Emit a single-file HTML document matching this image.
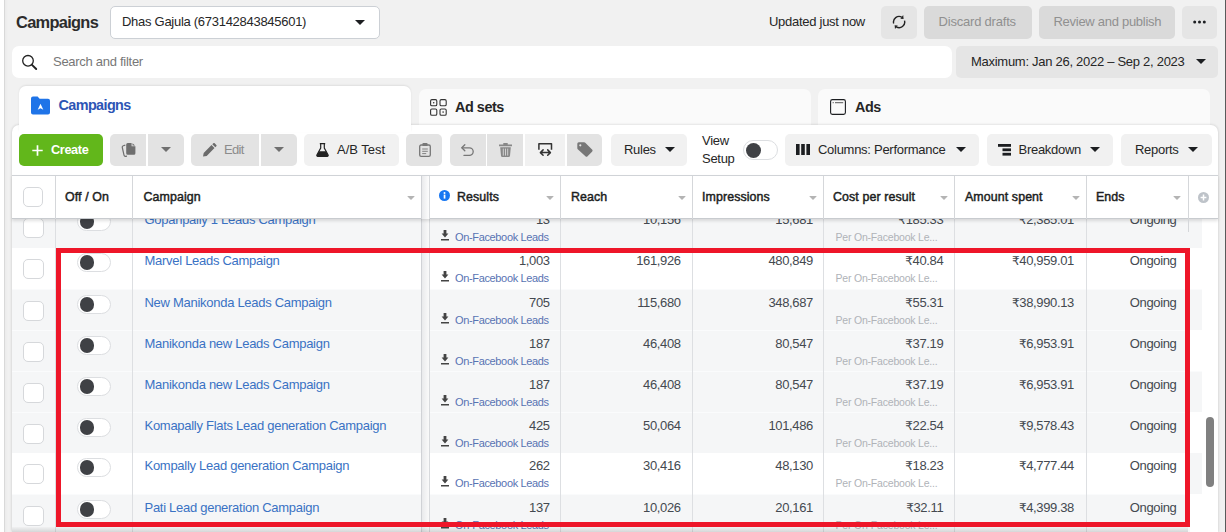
<!DOCTYPE html>
<html><head><meta charset="utf-8"><title>Campaigns</title>
<style>
*{box-sizing:border-box;margin:0;padding:0}
html,body{width:1226px;height:532px;overflow:hidden}
body{background:#f1f1f1;font-family:"Liberation Sans","DejaVu Sans",sans-serif;font-size:13px;letter-spacing:-.28px;color:#262626;position:relative}
.abs{position:absolute}
svg{position:absolute;display:block}
.tx{position:absolute;white-space:nowrap;line-height:16px;font-size:13px}
.btn{position:absolute;background:#e3e3e3;border-radius:5px;height:32px;top:134px;white-space:nowrap}
.btn.lt{background:#f1f1f1}
.btn .tx{top:8px}
.tri{position:absolute;width:0;height:0;border-left:5px solid transparent;border-right:5px solid transparent;border-top:5.5px solid #1c1e21}
.tri.g{border-top-color:#707070}
.tri.s{border-left-width:4px;border-right-width:4px;border-top:4.4px solid #b4b4b4;border-radius:1px}
/* table */
#rows{position:absolute;left:12px;top:0;width:1190px;height:532px;overflow:hidden}
.row{position:absolute;left:0;width:1190px;background:#fff;color:#444950}
.row.g{background:#f5f6f7;border-top:1px solid #fafbfc}
.row>*{position:absolute}
.cb{left:11.2px;top:10.6px;width:20.4px;height:20.4px;border:1px solid #d6d8db;border-radius:5px;background:#fff}
.tg{left:65px;top:5px;width:34px;height:18.5px;border:1px solid #dcdee1;border-radius:10px;background:#fff}
.tg b{position:absolute;left:1.6px;top:1px;width:14.5px;height:14.5px;border-radius:50%;background:#3f4145}
.nm{left:132.5px;top:5px;line-height:16px;font-size:13px;color:#3a72c4;white-space:nowrap}
.n{top:5px;line-height:16px;font-size:13px;white-space:nowrap;letter-spacing:-.35px}
.n u{text-decoration:none;font-size:12px}
.sub{top:24px;height:12px;width:120px}
.sub svg{left:0;top:-1px}
.sub em{position:absolute;left:14.5px;top:0;font-style:normal;font-size:11px;line-height:12px;color:#5873b3;white-space:nowrap;letter-spacing:-.35px}
.sub2{top:24px;font-size:10.5px;line-height:12px;color:#b0b3b8;white-space:nowrap;letter-spacing:-.2px}
.vl{position:absolute;width:1px;background:#dddfe2}
#hdr{position:absolute;left:12px;top:175px;width:1206px;height:44px;background:#fff;border-top:1px solid #d0d3d7;border-bottom:1px solid #c8cbcf;box-shadow:0 2px 3px rgba(0,0,0,.12)}
#hdr .h{position:absolute;top:13px;font-size:12.4px;font-weight:normal;-webkit-text-stroke:.45px #1c1e21;line-height:16px;color:#1c1e21;letter-spacing:.1px;white-space:nowrap}
</style></head><body>
<!-- left strip -->
<div class="abs" style="left:0;top:0;width:3.800px;height:532px;background:#fff"></div><div class="abs" style="left:3.800px;top:0;width:1.500px;height:532px;background:#d9d9d9"></div><div class="abs" style="left:5.300px;top:0;width:3px;height:532px;background:linear-gradient(90deg,#ebebeb,#f1f1f1)"></div>
<div class="abs" style="left:1224.700px;top:0;width:1.300px;height:532px;background:#5a5a5a"></div>

<!-- top bar -->
<div class="tx" style="left:16px;top:12px;font-size:16.400px;font-weight:bold;line-height:20px;letter-spacing:-.7px;color:#2c2c2c">Campaigns</div>
<div class="abs" style="left:110px;top:6px;width:270px;height:33px;background:#fff;border:1px solid #ccd0d5;border-radius:5px">
  <span class="tx" style="left:11px;top:7px">Dhas Gajula (673142843845601)</span>
  <span class="tri" style="left:244px;top:13px"></span>
</div>
<div class="tx" style="left:769px;top:14px">Updated just now</div>
<div class="abs" style="left:881px;top:6px;width:36px;height:33px;background:#e5e5e5;border-radius:5px">
  <svg style="left:11px;top:8px" width="15" height="17" viewBox="0 0 15 17"><path d="M1.69 9.550A5.600 5.600 0 0 1 9.900 3.250M12.510 6.650A5.600 5.600 0 0 1 4.300 12.950" fill="none" stroke="#222" stroke-width="1.400"/><path d="M11.600 4.900L11.200 1.100 8.400 4.700zM2.600 11.300L3 15.100 5.800 11.500z" fill="#222"/></svg>
</div>
<div class="abs" style="left:924px;top:6px;width:108px;height:33px;background:#dadada;border-radius:5px"><span class="tx" style="left:14.500px;top:8px;color:#909090;letter-spacing:-.2px">Discard drafts</span></div>
<div class="abs" style="left:1039px;top:6px;width:136px;height:33px;background:#dadada;border-radius:5px"><span class="tx" style="left:14.500px;top:8px;color:#909090">Review and publish</span></div>
<div class="abs" style="left:1182px;top:6px;width:35px;height:33px;background:#e5e5e5;border-radius:5px">
  <svg style="left:11px;top:14px" width="13" height="4" viewBox="0 0 13 4" fill="#1c1e21"><circle cx="1.700" cy="2" r="1.500"/><circle cx="6.500" cy="2" r="1.500"/><circle cx="11.300" cy="2" r="1.500"/></svg>
</div>

<!-- search -->
<div class="abs" style="left:12px;top:46px;width:940px;height:32px;background:#fff;border-radius:7px">
  <svg style="left:9px;top:8px" width="17" height="17" viewBox="0 0 17 17" fill="none" stroke="#222" stroke-linecap="round"><circle cx="7" cy="6.800" r="5.300" stroke-width="1.300"/><path d="M11 10.800l4.200 4.200" stroke-width="1.900"/></svg>
  <span class="tx" style="left:41px;top:8px;color:#777">Search and filter</span>
</div>
<div class="abs" style="left:956px;top:46px;width:262px;height:32px;background:#e5e5e5;border-radius:5px">
  <span class="tx" style="left:15px;top:8px">Maximum: Jan 26, 2022 – Sep 2, 2023</span>
  <span class="tri" style="left:240px;top:13px"></span>
</div>

<!-- tabs -->
<div class="abs" style="left:419px;top:89px;width:392px;height:40px;background:#fafafa;border-radius:7px 7px 0 0">
  <svg style="left:11px;top:10px" width="17" height="17" viewBox="0 0 17 17" fill="none" stroke="#333" stroke-width="1.100"><rect x=".6" y=".6" width="6.200" height="6.200" rx="1.300"/><rect x="10" y=".6" width="6.200" height="6.200" rx="1.300"/><rect x=".6" y="10" width="6.200" height="6.200" rx="1.300"/><rect x="10" y="10" width="6.200" height="6.200" rx="1.300"/><circle cx="3.700" cy="3.700" r=".8" fill="#333" stroke="none"/><circle cx="13.100" cy="13.100" r=".8" fill="#333" stroke="none"/></svg>
  <span class="tx" style="left:36px;top:9px;font-size:14.400px;font-weight:bold;line-height:18px;letter-spacing:-.45px">Ad sets</span>
</div>
<div class="abs" style="left:818px;top:89px;width:392px;height:40px;background:#fafafa;border-radius:7px 7px 0 0">
  <svg style="left:12px;top:10px" width="16" height="16" viewBox="0 0 16 16" fill="none" stroke="#1c1e21" stroke-width="1.100"><rect x=".6" y=".6" width="14.800" height="14.800" rx="1.800"/><path d="M2.600 3.700h1.200M5 3.700h8.200" stroke="#777" stroke-width="1.300"/></svg>
  <span class="tx" style="left:37px;top:9px;font-size:14.400px;font-weight:bold;line-height:18px;letter-spacing:-.45px">Ads</span>
</div>

<!-- panel -->
<div class="abs" id="panel" style="left:12px;top:125px;width:1206px;height:407px;background:#fff;border-radius:7px 7px 0 0;box-shadow:0 0 3px rgba(0,0,0,.18)"></div>

<div class="abs" style="left:19px;top:86px;width:392px;height:46px;background:#fff;border-radius:7px 7px 0 0;box-shadow:0 -1px 2px rgba(0,0,0,.08)">
  <svg style="left:12px;top:9.500px" width="19" height="19" viewBox="0 0 19 19"><path d="M0 2.500A2 2 0 0 1 2 .5h4.600l2 2.300H17a2 2 0 0 1 2 2V16.500a2 2 0 0 1-2 2H2a2 2 0 0 1-2-2z" fill="#1f74e8"/><path d="M9.500 7.800l2.800 6-2.800-1.500-2.800 1.500z" fill="#fff"/></svg>
  <span class="tx" style="left:39.500px;top:10px;font-size:14.400px;font-weight:bold;color:#2d55b5;line-height:18px;letter-spacing:-.6px">Campaigns</span>
</div>

<!-- toolbar -->
<div class="btn" style="left:19px;width:84px;background:#62b71b;border-radius:5px"><svg style="left:13px;top:11px" width="11" height="11" viewBox="0 0 11 11"><path d="M5.500.3v10.400M.3 5.500h10.400" stroke="#fff" stroke-width="1.700"/></svg><span class="tx" style="left:32px;color:#fff;font-weight:bold;font-size:12.700px;letter-spacing:-.35px">Create</span></div>
<div class="btn" style="left:110px;width:36px;border-radius:5px 0 0 5px"><svg style="left:11px;top:9px" width="15" height="14" viewBox="0 0 15 14"><path d="M4.300 2.100L2.300 2.700Q1 3.100 1.300 4.500L3 12.200Q3.300 13.500 4.700 13.300L6 13.100" fill="none" stroke="#6f6f6f" stroke-width="1.200"/><path d="M6.700 0h3.900v3.200h3.800v7.100a1.500 1.500 0 0 1-1.500 1.500H6.700a1.500 1.500 0 0 1-1.500-1.500V1.500A1.500 1.500 0 0 1 6.700 0zM11.500.3l2.600 2.200h-2.600z" fill="#6f6f6f"/></svg></div>
<div class="btn" style="left:148px;width:36px;border-radius:0 5px 5px 0"><span class="tri g" style="left:12.500px;top:13px"></span></div>
<div class="btn" style="left:191px;width:68px;border-radius:5px 0 0 5px"><svg style="left:11.500px;top:8.500px" width="14" height="14" viewBox="0 0 14 14" fill="#6b6b6b"><path d="M0 13.600L.7 9.900 8.500 2.100 11.500 5.100 3.700 12.900zM9.300 1.300L10.300.3a1 1 0 0 1 1.400 0l1.600 1.600a1 1 0 0 1 0 1.400l-1 1z"/></svg><span class="tx" style="left:33px;color:#8c8c8c;letter-spacing:-.7px">Edit</span></div>
<div class="btn" style="left:261px;width:36px;border-radius:0 5px 5px 0"><span class="tri g" style="left:12.500px;top:13px"></span></div>
<div class="btn lt" style="left:304px;width:95px"><svg style="left:11.500px;top:9px" width="13" height="14" viewBox="0 0 13 14"><path d="M3.800.6h5.400M4.700.6v4.500L.9 12a1 1 0 0 0 .9 1.400h9.400a1 1 0 0 0 .9-1.400L8.300 5.100V.6" fill="none" stroke="#222" stroke-width="1.200"/><path d="M3 8.300h7l2.100 3.700a1 1 0 0 1-.9 1.400H1.800A1 1 0 0 1 .9 12z" fill="#222"/></svg><span class="tx" style="left:33px;letter-spacing:0">A/B Test</span></div>
<div class="btn" style="left:406px;width:36px"><svg style="left:12.500px;top:9px" width="12" height="14" viewBox="0 0 12 14"><rect x=".7" y="2" width="10.600" height="11.300" rx="1.400" fill="none" stroke="#777" stroke-width="1.300"/><rect x="3.400" y="0" width="5.200" height="3" rx="1" fill="#777"/><path d="M3.200 6h5.600M3.200 8.300h5.600M3.200 10.600h4" stroke="#777" stroke-width=".9"/></svg></div>
<div class="btn" style="left:450px;width:35.500px;border-radius:5px 0 0 5px"><svg style="left:11px;top:10px" width="13" height="12" viewBox="0 0 13 12" fill="none" stroke="#777" stroke-width="1.300" stroke-linecap="round" stroke-linejoin="round"><path d="M3.800.8L.8 3.800 3.800 6.800"/><path d="M1.200 3.800H8.400a3.800 3.800 0 0 1 0 7.600H3"/></svg></div>
<div class="btn" style="left:487px;width:36px;border-radius:0"><svg style="left:12px;top:8.800px" width="13" height="14" viewBox="0 0 13 14"><path d="M4.300 0h4.400v1.600H13v1.700H0V1.600h4.300zM1.200 4.300h10.600l-.8 8.400a1.400 1.400 0 0 1-1.400 1.300H3.400A1.400 1.400 0 0 1 2 12.700z" fill="#888"/><path d="M4.300 5.600v7M6.500 5.600v7M8.700 5.600v7" stroke="#e4e4e4" stroke-width=".8"/></svg></div>
<div class="btn lt" style="left:525px;width:40px;border-radius:0"><svg style="left:13px;top:8.800px" width="15" height="14" viewBox="0 0 15 14" fill="none" stroke="#333" stroke-linejoin="round"><path d="M.9 6.800V.8H13.500V6.800" stroke-width="1.500"/><path d="M2.400 9.600H12.400M5.100 6.900L2.400 9.600 5.100 12.300M9.700 6.900L12.400 9.600 9.700 12.300" stroke-width="1.500" stroke-linecap="round"/></svg></div>
<div class="btn" style="left:567px;width:35px;border-radius:0 5px 5px 0"><svg style="left:9.900px;top:8.400px" width="16" height="15" viewBox="0 0 16 15"><path d="M.3 1.800A1.500 1.500 0 0 1 1.800.3h5.400a1.500 1.500 0 0 1 1.060.44l6.800 6.800a1.500 1.500 0 0 1 0 2.120l-4.500 4.500a1.500 1.500 0 0 1-2.120 0L.74 7.360A1.500 1.500 0 0 1 .3 6.300z" fill="#777"/><circle cx="3.300" cy="3.300" r="1.100" fill="#e4e4e4"/></svg></div>
<div class="btn lt" style="left:610.500px;width:76px"><span class="tx" style="left:13.500px">Rules</span><span class="tri" style="left:54px;top:13px"></span></div>
<div class="tx" style="left:702px;top:133px;line-height:16px">View</div>
<div class="tx" style="left:702px;top:151px;line-height:16px">Setup</div>
<i class="tg abs" style="left:743px;top:140px;width:34.500px;height:20px"><b style="left:1.800px;top:1.800px;width:15px;height:15px"></b></i>
<div class="btn lt" style="left:785px;width:194px">
  <svg style="left:11px;top:10px" width="14" height="11" viewBox="0 0 14 11" fill="#1c1e21"><rect x="0" y="0" width="3.600" height="11"/><rect x="5.200" y="0" width="3.600" height="11"/><rect x="10.400" y="0" width="3.600" height="11"/></svg>
  <span class="tx" style="left:33px">Columns: Performance</span><span class="tri" style="left:171px;top:13px"></span></div>
<div class="btn lt" style="left:986.500px;width:126.500px">
  <svg style="left:11px;top:10px" width="13" height="12" viewBox="0 0 13 12" fill="#1c1e21"><rect x="0" y="0" width="13" height="2.800"/><rect x="4.500" y="4.400" width="8.500" height="2.800"/><rect x="4.500" y="8.800" width="8.500" height="2.800"/></svg>
  <span class="tx" style="left:32px">Breakdown</span><span class="tri" style="left:103.500px;top:13px"></span></div>
<div class="btn lt" style="left:1120.500px;width:91px"><span class="tx" style="left:14.500px">Reports</span><span class="tri" style="left:67px;top:13px"></span></div>
<!-- rows -->
<div id="rows">
<div class="row g" style="top:206px;height:42px">
  <i class="cb"></i><i class="tg"><b></b></i>
  <a class="nm">Gopanpally 1 Leads Campaign</a>
  <span class="n" style="right:652.3px">13</span>
  <span class="sub" style="left:428.5px"><svg width="8" height="11" viewBox="0 0 8 11"><path d="M2.6 0h2.8v3.6h2L4 7.4.6 3.600h2zM0 9h8v1.600H0z" fill="#444"/></svg><em>On-Facebook Leads</em></span>
  <span class="n" style="right:521.3px">10,156</span>
  <span class="n" style="right:389px">15,681</span>
  <span class="n" style="right:258.7px"><u>₹</u>185.33</span>
  <span class="sub2" style="left:823.5px">Per On-Facebook Le...</span>
  <span class="n" style="right:128px"><u>₹</u>2,385.01</span>
  <span class="n" style="right:25.5px">Ongoing</span>
</div>
<div class="row w" style="top:248px;height:41px">
  <i class="cb"></i><i class="tg"><b></b></i>
  <a class="nm">Marvel Leads Campaign</a>
  <span class="n" style="right:652.3px">1,003</span>
  <span class="sub" style="left:428.5px"><svg width="8" height="11" viewBox="0 0 8 11"><path d="M2.6 0h2.8v3.6h2L4 7.4.6 3.600h2zM0 9h8v1.600H0z" fill="#444"/></svg><em>On-Facebook Leads</em></span>
  <span class="n" style="right:521.3px">161,926</span>
  <span class="n" style="right:389px">480,849</span>
  <span class="n" style="right:258.7px"><u>₹</u>40.84</span>
  <span class="sub2" style="left:823.5px">Per On-Facebook Le...</span>
  <span class="n" style="right:128px"><u>₹</u>40,959.01</span>
  <span class="n" style="right:25.5px">Ongoing</span>
</div>
<div class="row g" style="top:289px;height:41px">
  <i class="cb"></i><i class="tg"><b></b></i>
  <a class="nm">New Manikonda Leads Campaign</a>
  <span class="n" style="right:652.3px">705</span>
  <span class="sub" style="left:428.5px"><svg width="8" height="11" viewBox="0 0 8 11"><path d="M2.6 0h2.8v3.6h2L4 7.4.6 3.600h2zM0 9h8v1.600H0z" fill="#444"/></svg><em>On-Facebook Leads</em></span>
  <span class="n" style="right:521.3px">115,680</span>
  <span class="n" style="right:389px">348,687</span>
  <span class="n" style="right:258.7px"><u>₹</u>55.31</span>
  <span class="sub2" style="left:823.5px">Per On-Facebook Le...</span>
  <span class="n" style="right:128px"><u>₹</u>38,990.13</span>
  <span class="n" style="right:25.5px">Ongoing</span>
</div>
<div class="row g" style="top:330px;height:41px">
  <i class="cb"></i><i class="tg"><b></b></i>
  <a class="nm">Manikonda new Leads Campaign</a>
  <span class="n" style="right:652.3px">187</span>
  <span class="sub" style="left:428.5px"><svg width="8" height="11" viewBox="0 0 8 11"><path d="M2.6 0h2.8v3.6h2L4 7.4.6 3.600h2zM0 9h8v1.600H0z" fill="#444"/></svg><em>On-Facebook Leads</em></span>
  <span class="n" style="right:521.3px">46,408</span>
  <span class="n" style="right:389px">80,547</span>
  <span class="n" style="right:258.7px"><u>₹</u>37.19</span>
  <span class="sub2" style="left:823.5px">Per On-Facebook Le...</span>
  <span class="n" style="right:128px"><u>₹</u>6,953.91</span>
  <span class="n" style="right:25.5px">Ongoing</span>
</div>
<div class="row g" style="top:371px;height:41px">
  <i class="cb"></i><i class="tg"><b></b></i>
  <a class="nm">Manikonda new Leads Campaign</a>
  <span class="n" style="right:652.3px">187</span>
  <span class="sub" style="left:428.5px"><svg width="8" height="11" viewBox="0 0 8 11"><path d="M2.6 0h2.8v3.6h2L4 7.4.6 3.600h2zM0 9h8v1.600H0z" fill="#444"/></svg><em>On-Facebook Leads</em></span>
  <span class="n" style="right:521.3px">46,408</span>
  <span class="n" style="right:389px">80,547</span>
  <span class="n" style="right:258.7px"><u>₹</u>37.19</span>
  <span class="sub2" style="left:823.5px">Per On-Facebook Le...</span>
  <span class="n" style="right:128px"><u>₹</u>6,953.91</span>
  <span class="n" style="right:25.5px">Ongoing</span>
</div>
<div class="row g" style="top:412px;height:41px">
  <i class="cb"></i><i class="tg"><b></b></i>
  <a class="nm">Komapally Flats Lead generation Campaign</a>
  <span class="n" style="right:652.3px">425</span>
  <span class="sub" style="left:428.5px"><svg width="8" height="11" viewBox="0 0 8 11"><path d="M2.6 0h2.8v3.6h2L4 7.4.6 3.600h2zM0 9h8v1.600H0z" fill="#444"/></svg><em>On-Facebook Leads</em></span>
  <span class="n" style="right:521.3px">50,064</span>
  <span class="n" style="right:389px">101,486</span>
  <span class="n" style="right:258.7px"><u>₹</u>22.54</span>
  <span class="sub2" style="left:823.5px">Per On-Facebook Le...</span>
  <span class="n" style="right:128px"><u>₹</u>9,578.43</span>
  <span class="n" style="right:25.5px">Ongoing</span>
</div>
<div class="row w" style="top:453px;height:41px">
  <i class="cb"></i><i class="tg"><b></b></i>
  <a class="nm">Kompally Lead generation Campaign</a>
  <span class="n" style="right:652.3px">262</span>
  <span class="sub" style="left:428.5px"><svg width="8" height="11" viewBox="0 0 8 11"><path d="M2.6 0h2.8v3.6h2L4 7.4.6 3.600h2zM0 9h8v1.600H0z" fill="#444"/></svg><em>On-Facebook Leads</em></span>
  <span class="n" style="right:521.3px">30,416</span>
  <span class="n" style="right:389px">48,130</span>
  <span class="n" style="right:258.7px"><u>₹</u>18.23</span>
  <span class="sub2" style="left:823.5px">Per On-Facebook Le...</span>
  <span class="n" style="right:128px"><u>₹</u>4,777.44</span>
  <span class="n" style="right:25.5px">Ongoing</span>
</div>
<div class="row g" style="top:494px;height:41px">
  <i class="cb"></i><i class="tg"><b></b></i>
  <a class="nm">Pati Lead generation Campaign</a>
  <span class="n" style="right:652.3px">137</span>
  <span class="sub" style="left:428.5px"><svg width="8" height="11" viewBox="0 0 8 11"><path d="M2.6 0h2.8v3.6h2L4 7.4.6 3.600h2zM0 9h8v1.600H0z" fill="#444"/></svg><em>On-Facebook Leads</em></span>
  <span class="n" style="right:521.3px">10,026</span>
  <span class="n" style="right:389px">20,161</span>
  <span class="n" style="right:258.7px"><u>₹</u>32.11</span>
  <span class="sub2" style="left:823.5px">Per On-Facebook Le...</span>
  <span class="n" style="right:128px"><u>₹</u>4,399.38</span>
  <span class="n" style="right:25.5px">Ongoing</span>
</div>
</div>
<!-- column lines -->
<div class="vl" style="left:55px;top:176px;height:356px"></div>
<div class="vl" style="left:132px;top:176px;height:356px"></div>
<div class="abs" style="left:421px;top:176px;width:9px;height:356px;border-left:1px solid #d0d2d6;border-right:1px solid #d8dadd;background:linear-gradient(90deg,#e9eaec,#fafafa)"></div>
<div class="vl" style="left:560px;top:176px;height:356px"></div>
<div class="vl" style="left:692px;top:176px;height:356px"></div>
<div class="vl" style="left:823px;top:176px;height:356px"></div>
<div class="vl" style="left:954px;top:176px;height:356px"></div>
<div class="vl" style="left:1086px;top:176px;height:356px"></div>

<!-- header -->
<div id="hdr">
  <i class="cb abs" style="left:11px;top:11px"></i>
  <span class="h" style="left:53px">Off / On</span>
  <span class="h" style="left:131.500px">Campaign</span><span class="tri s" style="left:395px;top:20px"></span>
  <svg style="left:426.500px;top:13.500px" width="11" height="11" viewBox="0 0 11 11"><circle cx="5.500" cy="5.500" r="5.500" fill="#1877f2"/><rect x="4.700" y="4.600" width="1.700" height="4" fill="#fff"/><circle cx="5.500" cy="2.900" r="1" fill="#fff"/></svg>
  <span class="h" style="left:445px">Results</span><span class="tri s" style="left:533.5px;top:20px"></span>
  <span class="h" style="left:559px">Reach</span><span class="tri s" style="left:665.5px;top:20px"></span>
  <span class="h" style="left:690px">Impressions</span><span class="tri s" style="left:796.5px;top:20px"></span>
  <span class="h" style="left:821px">Cost per result</span><span class="tri s" style="left:927.5px;top:20px"></span>
  <span class="h" style="left:953px">Amount spent</span><span class="tri s" style="left:1059.5px;top:20px"></span>
  <span class="h" style="left:1084px">Ends</span><span class="tri s" style="left:1160.5px;top:20px"></span>
  <svg style="left:1185.500px;top:15.500px" width="11" height="11" viewBox="0 0 11 11"><circle cx="5.500" cy="5.500" r="5.500" fill="#bec3c9"/><path d="M5.500 2.600v5.800M2.600 5.500h5.800" stroke="#fff" stroke-width="1.500"/></svg>
</div>
<div class="vl" style="left:55px;top:176px;height:43px;background:#d5d7da"></div>
<div class="vl" style="left:132px;top:176px;height:43px;background:#d5d7da"></div>
<div class="abs" style="left:421px;top:176px;width:9px;height:43px;border-left:1px solid #d0d2d6;border-right:1px solid #d8dadd;background:linear-gradient(90deg,#e9eaec,#fdfdfd)"></div>
<div class="vl" style="left:560px;top:176px;height:43px;background:#d5d7da"></div>
<div class="vl" style="left:692px;top:176px;height:43px;background:#d5d7da"></div>
<div class="vl" style="left:823px;top:176px;height:43px;background:#d5d7da"></div>
<div class="vl" style="left:954px;top:176px;height:43px;background:#d5d7da"></div>
<div class="vl" style="left:1086px;top:176px;height:43px;background:#d5d7da"></div>
<div class="vl" style="left:1188px;top:176px;height:56px;background:#d5d7da"></div>

<!-- scrollbar -->
<div class="abs" style="left:1206px;top:417px;width:8px;height:70px;border-radius:4px;background:#808080"></div>

<!-- red highlight -->
<div class="abs" style="left:12px;top:527px;width:1176px;height:5px;background:linear-gradient(180deg,rgba(0,0,0,.02),rgba(0,0,0,.13))"></div>
<div class="abs" style="left:1190px;top:330px;width:12px;height:41px;background:#fff"></div>
<div class="abs" style="left:1190px;top:412px;width:12px;height:41px;background:#fff"></div>
<div class="abs" style="left:1190px;top:453px;width:12px;height:41px;background:#f5f6f7"></div>
<div class="abs" style="left:1190px;top:494px;width:12px;height:38px;background:#fff"></div>
<div class="abs" style="left:56px;top:248px;width:1134px;height:279px;border:5px solid #ee1629"></div>
</body></html>
